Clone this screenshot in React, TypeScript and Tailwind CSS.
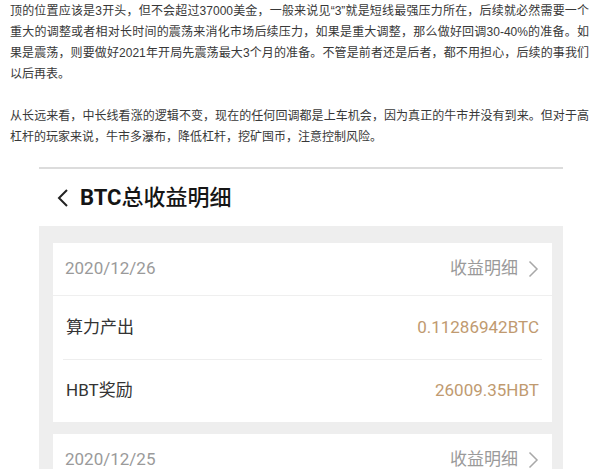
import React from 'react';

const article = [
  [
    '顶的位置应该是3开头，但不会超过37000美金，一般来说见“3”就是短线最强压力所在，后续就必然需要一个',
    '重大的调整或者相对长时间的震荡来消化市场后续压力，如果是重大调整，那么做好回调30-40%的准备。如',
    '果是震荡，则要做好2021年开局先震荡最大3个月的准备。不管是前者还是后者，都不用担心，后续的事我们',
    '以后再表。',
  ],
  [
    '从长远来看，中长线看涨的逻辑不变，现在的任何回调都是上车机会，因为真正的牛市并没有到来。但对于高',
    '杠杆的玩家来说，牛市多瀑布，降低杠杆，挖矿囤币，注意控制风险。',
  ],
];

const records = [
  { date: '2020/12/26', btc: '0.11286942BTC', hbt: '26009.35HBT' },
  { date: '2020/12/25', btc: '0.11301476BTC', hbt: '25987.10HBT' },
];

const Chevron = ({ dir }: { dir: 'left' | 'right' }) => (
  <svg width="11" height="18" viewBox="0 0 11 18" fill="none">
    {dir === 'left' ? (
      <path d="M10 1 L2 9 L10 17" stroke="#222" strokeWidth="2" strokeLinejoin="miter" />
    ) : (
      <path d="M1.5 1.5 L9 9 L1.5 16.5" stroke="#a8a8a8" strokeWidth="1.5" />
    )}
  </svg>
);

const RecordCard = ({ date, btc, hbt }: { date: string; btc: string; hbt: string }) => (
  <div className="bg-white">
    <div className="flex h-[53px] items-center justify-between border-b border-[#efefef] pl-3 pr-[13px]">
      <span className="text-[17px] text-[#9a9a9a]">{date}</span>
      <span className="flex items-center gap-[10px] text-[17px] text-[#9a9a9a]">
        收益明细
        <Chevron dir="right" />
      </span>
    </div>
    <div className="px-[10px]">
      <div className="flex h-[64px] items-center justify-between border-b border-[#eeeeee] px-[3px]">
        <span className="text-[17px] text-[#333]">算力产出</span>
        <span className="text-[17px] text-[#c09a70]">{btc}</span>
      </div>
      <div className="flex h-[62px] items-center justify-between px-[3px]">
        <span className="text-[17px] text-[#333]">HBT奖励</span>
        <span className="text-[17px] text-[#c09a70]">{hbt}</span>
      </div>
    </div>
  </div>
);

export default function App() {
  return (
    <div className="h-[469px] w-[600px] overflow-hidden bg-white font-['Roboto','Noto_Sans_CJK_SC',sans-serif]">
      {/* article text */}
      <div className="pl-[10px] pr-[11px] pt-[1px] font-['Liberation_Sans','Noto_Sans_CJK_SC',sans-serif] text-[12px] leading-[21px] text-[#383838]">
        {article.map((para, i) => (
          <div key={i} className={i > 0 ? 'mt-[21px]' : ''}>
            {para.map((line, j) => (
              <div
                key={j}
                className={j < para.length - 1 ? 'text-justify [text-align-last:justify]' : ''}
              >
                {line}
              </div>
            ))}
          </div>
        ))}
      </div>

      {/* embedded app screenshot */}
      <div className="mt-[19px] ml-[39px] w-[524px] border-t-2 border-[#dcdcdc]">
        <div className="flex h-[57px] items-center gap-3 pl-[18px]">
          <Chevron dir="left" />
          <span className="text-[22px] text-[#151515]">
            <span className="font-bold">BTC</span>
            <span className="font-medium">总收益明细</span>
          </span>
        </div>
        <div className="flex flex-col gap-3 bg-[#eeeeee] pb-4 pl-[14px] pr-[11px] pt-[17px]">
          {records.map((r) => (
            <RecordCard key={r.date} {...r} />
          ))}
        </div>
      </div>
    </div>
  );
}
